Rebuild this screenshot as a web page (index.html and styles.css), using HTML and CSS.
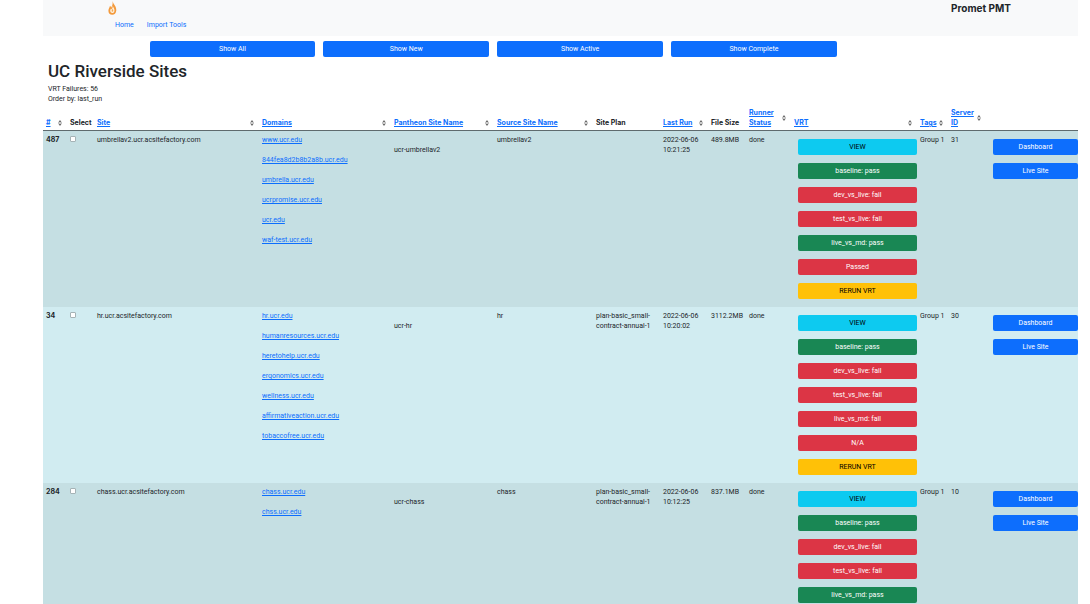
FILE: index.html
```html
<!DOCTYPE html>
<html lang="en">
<head>
<meta charset="utf-8">
<title>UC Riverside Sites - Promet PMT</title>
<link rel="stylesheet" href="styles.css">
</head>
<body>
<svg class="defs" aria-hidden="true">
  <symbol id="sort" viewBox="0 0 4 6"><path d="M2 0 3.600 2.300H.4ZM2 6 .4 3.700H3.600Z" fill="#666"/><path d="M.8 2V4M3.200 2V4" stroke="#888" stroke-width=".6"/></symbol>
</svg>
<div class="page">
  <header class="navbar">
    <nav class="nav" aria-label="Main">
      <a class="logo" href="#" aria-label="Promet">
        <svg viewBox="0 0 9 14" width="9" height="14"><path d="M4.600 0C5 3 8.600 5.200 8.300 9.400 8.100 12.200 6.400 13.800 4.200 13.800 1.900 13.800.4 12.200.4 9.800.4 7.600 1.600 6.600 2 4.700 2.800 5.300 3 6 3 6.800 4.400 4.900 4.900 2.600 4.600 0Z" fill="#f39a3c"/><path d="M4.700 4.200C5 6.600 6.700 7.600 6.500 9.700 6.400 11.200 5.400 12 4.300 12 3 12 2.100 11.100 2.200 9.600 2.300 8.600 2.700 8.300 3 7.500L3.700 8.400C4.500 7.200 4.800 5.800 4.700 4.200Z" fill="#fdf0de"/><path d="M4.500 7.500C4.800 8.600 5.500 9.100 5.300 10 5.100 11 3.700 11 3.600 10 3.500 9.200 4.400 8.700 4.500 7.500Z" fill="#f5a94f"/></svg>
      </a>
      <div class="links"><a href="#">Home</a><a href="#">Import Tools</a></div>
    </nav>
    <div class="brand">Promet PMT</div>
  </header>

  <main>
    <div class="filters">
      <button class="btn primary" type="button">Show All</button>
      <button class="btn primary" type="button">Show New</button>
      <button class="btn primary" type="button">Show Active</button>
      <button class="btn primary" type="button">Show Complete</button>
    </div>
    <div class="intro">
      <h1>UC Riverside Sites</h1>
      <div>VRT Failures: 56</div>
      <div>Order by: last_run</div>
    </div>

    <table class="sites">
      <colgroup>
        <col class="c-num"><col class="c-select"><col class="c-site"><col class="c-domains"><col class="c-pantheon"><col class="c-source"><col class="c-plan"><col class="c-run"><col class="c-size"><col class="c-status"><col class="c-vrt"><col class="c-tags"><col class="c-server"><col class="c-actions">
      </colgroup>
      <thead>
        <tr>
          <th scope="col"><div class="sortable"><a href="#">#</a><svg class="sort"><use href="#sort"/></svg></div></th>
          <th scope="col">Select</th>
          <th scope="col"><div class="sortable"><a href="#">Site</a><svg class="sort"><use href="#sort"/></svg></div></th>
          <th scope="col"><div class="sortable"><a href="#">Domains</a><svg class="sort"><use href="#sort"/></svg></div></th>
          <th scope="col"><div class="sortable"><a href="#">Pantheon Site Name</a><svg class="sort"><use href="#sort"/></svg></div></th>
          <th scope="col"><div class="sortable"><a href="#">Source Site Name</a><svg class="sort"><use href="#sort"/></svg></div></th>
          <th scope="col">Site Plan</th>
          <th scope="col"><div class="sortable"><a href="#">Last Run</a><svg class="sort"><use href="#sort"/></svg></div></th>
          <th scope="col">File Size</th>
          <th scope="col"><div class="sortable"><a href="#">Runner<br>Status</a><svg class="sort"><use href="#sort"/></svg></div></th>
          <th scope="col"><div class="sortable"><a href="#">VRT</a><svg class="sort"><use href="#sort"/></svg></div></th>
          <th scope="col"><div class="sortable"><a href="#">Tags</a><svg class="sort"><use href="#sort"/></svg></div></th>
          <th scope="col"><div class="sortable"><a href="#">Server<br>ID</a><svg class="sort"><use href="#sort"/></svg></div></th>
          <td></td>
        </tr>
      </thead>
      <tbody>
        <tr>
          <th scope="row">487</th>
          <td><input type="checkbox" aria-label="Select umbrellav2"></td>
          <td>umbrellav2.ucr.acsitefactory.com</td>
          <td><ul class="domains"><li><a href="#">www.ucr.edu</a></li><li><a href="#">844fea8d2b8b2a8b.ucr.edu</a></li><li><a href="#">umbrella.ucr.edu</a></li><li><a href="#">ucrpromise.ucr.edu</a></li><li><a href="#">ucr.edu</a></li><li><a href="#">waf-test.ucr.edu</a></li></ul></td>
          <td><p class="pantheon">ucr-umbrellav2</p></td>
          <td>umbrellav2</td>
          <td></td>
          <td>2022-06-06<br>10:21:25</td>
          <td>489.8MB</td>
          <td>done</td>
          <td class="stack"><button class="btn info" type="button">VIEW</button><button class="btn success" type="button">baseline: pass</button><button class="btn danger" type="button">dev_vs_live: fail</button><button class="btn danger" type="button">test_vs_live: fail</button><button class="btn success" type="button">live_vs_md: pass</button><button class="btn danger" type="button">Passed</button><button class="btn warning" type="button">RERUN VRT</button></td>
          <td>Group 1</td>
          <td>31</td>
          <td class="stack"><button class="btn primary" type="button">Dashboard</button><button class="btn primary" type="button">Live Site</button></td>
        </tr>
        <tr>
          <th scope="row">34</th>
          <td><input type="checkbox" aria-label="Select hr"></td>
          <td>hr.ucr.acsitefactory.com</td>
          <td><ul class="domains"><li><a href="#">hr.ucr.edu</a></li><li><a href="#">humanresources.ucr.edu</a></li><li><a href="#">heretohelp.ucr.edu</a></li><li><a href="#">ergonomics.ucr.edu</a></li><li><a href="#">wellness.ucr.edu</a></li><li><a href="#">affirmativeaction.ucr.edu</a></li><li><a href="#">tobaccofree.ucr.edu</a></li></ul></td>
          <td><p class="pantheon">ucr-hr</p></td>
          <td>hr</td>
          <td>plan-basic_small-<br>contract-annual-1</td>
          <td>2022-06-06<br>10:20:02</td>
          <td>3112.2MB</td>
          <td>done</td>
          <td class="stack"><button class="btn info" type="button">VIEW</button><button class="btn success" type="button">baseline: pass</button><button class="btn danger" type="button">dev_vs_live: fail</button><button class="btn danger" type="button">test_vs_live: fail</button><button class="btn danger" type="button">live_vs_md: fail</button><button class="btn danger" type="button">N/A</button><button class="btn warning" type="button">RERUN VRT</button></td>
          <td>Group 1</td>
          <td>30</td>
          <td class="stack"><button class="btn primary" type="button">Dashboard</button><button class="btn primary" type="button">Live Site</button></td>
        </tr>
        <tr>
          <th scope="row">284</th>
          <td><input type="checkbox" aria-label="Select chass"></td>
          <td>chass.ucr.acsitefactory.com</td>
          <td><ul class="domains"><li><a href="#">chass.ucr.edu</a></li><li><a href="#">chss.ucr.edu</a></li></ul></td>
          <td><p class="pantheon">ucr-chass</p></td>
          <td>chass</td>
          <td>plan-basic_small-<br>contract-annual-1</td>
          <td>2022-06-06<br>10:12:25</td>
          <td>837.1MB</td>
          <td>done</td>
          <td class="stack"><button class="btn info" type="button">VIEW</button><button class="btn success" type="button">baseline: pass</button><button class="btn danger" type="button">dev_vs_live: fail</button><button class="btn danger" type="button">test_vs_live: fail</button><button class="btn success" type="button">live_vs_md: pass</button></td>
          <td>Group 1</td>
          <td>10</td>
          <td class="stack"><button class="btn primary" type="button">Dashboard</button><button class="btn primary" type="button">Live Site</button></td>
        </tr>
      </tbody>
    </table>
  </main>
</div>
</body>
</html>
```
FILE: styles.css
```css
* { box-sizing: border-box; }

body {
  margin: 0;
  background: #fff;
  color: #212529;
  font: 7px/10px Roboto, "Liberation Sans", sans-serif;
}

a { color: #0d6efd; }

.defs { display: none; }

.page { padding: 0 12px 0 43px; }

/* Top bar */
.navbar {
  display: flex;
  justify-content: space-between;
  background: #f8f9fa;
  padding: 0 67px 6px 65px;
}
.logo { display: block; height: 20px; padding-top: 1px; }
.logo svg { display: block; }
.links { display: flex; gap: 13px; padding-left: 7px; }
.links a { text-decoration: none; }
.brand {
  padding-top: 1px;
  font-family: Inter, "Liberation Sans", sans-serif;
  font-size: 10px;
  line-height: 14px;
  font-weight: 700;
}

/* Buttons */
.btn {
  display: block;
  width: 100%;
  height: 16px;
  padding: 0;
  border: 0;
  border-radius: 2px;
  font: inherit;
  color: #fff;
  text-align: center;
  cursor: pointer;
}
.primary { background: #0d6efd; }
.success { background: #198754; }
.danger { background: #dc3545; }
.info { background: #0dcaf0; color: #000; }
.warning { background: #ffc107; color: #000; }

.filters {
  display: grid;
  grid-template-columns: repeat(4, 1fr);
  gap: 8px;
  padding: 5px 23.3% 4px 10.3%;
}

.intro { padding-left: 5px; }
h1 {
  margin: 0;
  padding-bottom: 3px;
  font-size: 17px;
  line-height: 20px;
  font-weight: 500;
}

/* Sites table */
.sites {
  width: 100%;
  table-layout: fixed;
  border-collapse: separate;
  border-spacing: 0;
}
.c-num { width: 24px; }
.c-select { width: 27px; }
.c-site { width: 165px; }
.c-domains { width: 132px; }
.c-pantheon { width: 103px; }
.c-source { width: 99px; }
.c-plan { width: 67px; }
.c-run { width: 48px; }
.c-size { width: 38px; }
.c-status { width: 45px; }
.c-vrt { width: 126px; }
.c-tags { width: 31px; }
.c-server { width: 38px; }
.c-actions { width: 92px; }

.sites th, .sites td {
  padding: 4px 0 4px 3px;
  text-align: left;
  vertical-align: top;
  white-space: nowrap;
}
.sites th {
  font-family: Inter, "Liberation Sans", sans-serif;
  font-weight: 700;
}
.sites thead th, .sites thead td {
  padding: 4px 0 2px 3px;
  vertical-align: bottom;
  border-bottom: 1px solid #5f6b6e;
}
.sites tbody tr { background: #d1ecf1; }
.sites tbody tr:nth-child(odd) { background: #c5dfe3; }

.sortable {
  display: flex;
  justify-content: space-between;
  align-items: center;
  padding-right: 5px;
}
.sort { flex: none; width: 4px; height: 6px; }

.sites .stack { padding-left: 7px; }
.stack .btn { margin: 4px 0 8px; }
.stack .btn + .btn { margin-top: 8px; }
.stack .btn:last-child { margin-bottom: 4px; }

.domains { margin: 0; padding: 0; list-style: none; }
.domains li { margin-bottom: 10px; }
.pantheon { margin: 10px 0; }

input[type="checkbox"] {
  appearance: none;
  display: block;
  width: 6px;
  height: 6px;
  margin: 1px 0 0;
  border: 1px solid #a5b3b6;
  border-radius: 1px;
  background: #fff;
}
```
